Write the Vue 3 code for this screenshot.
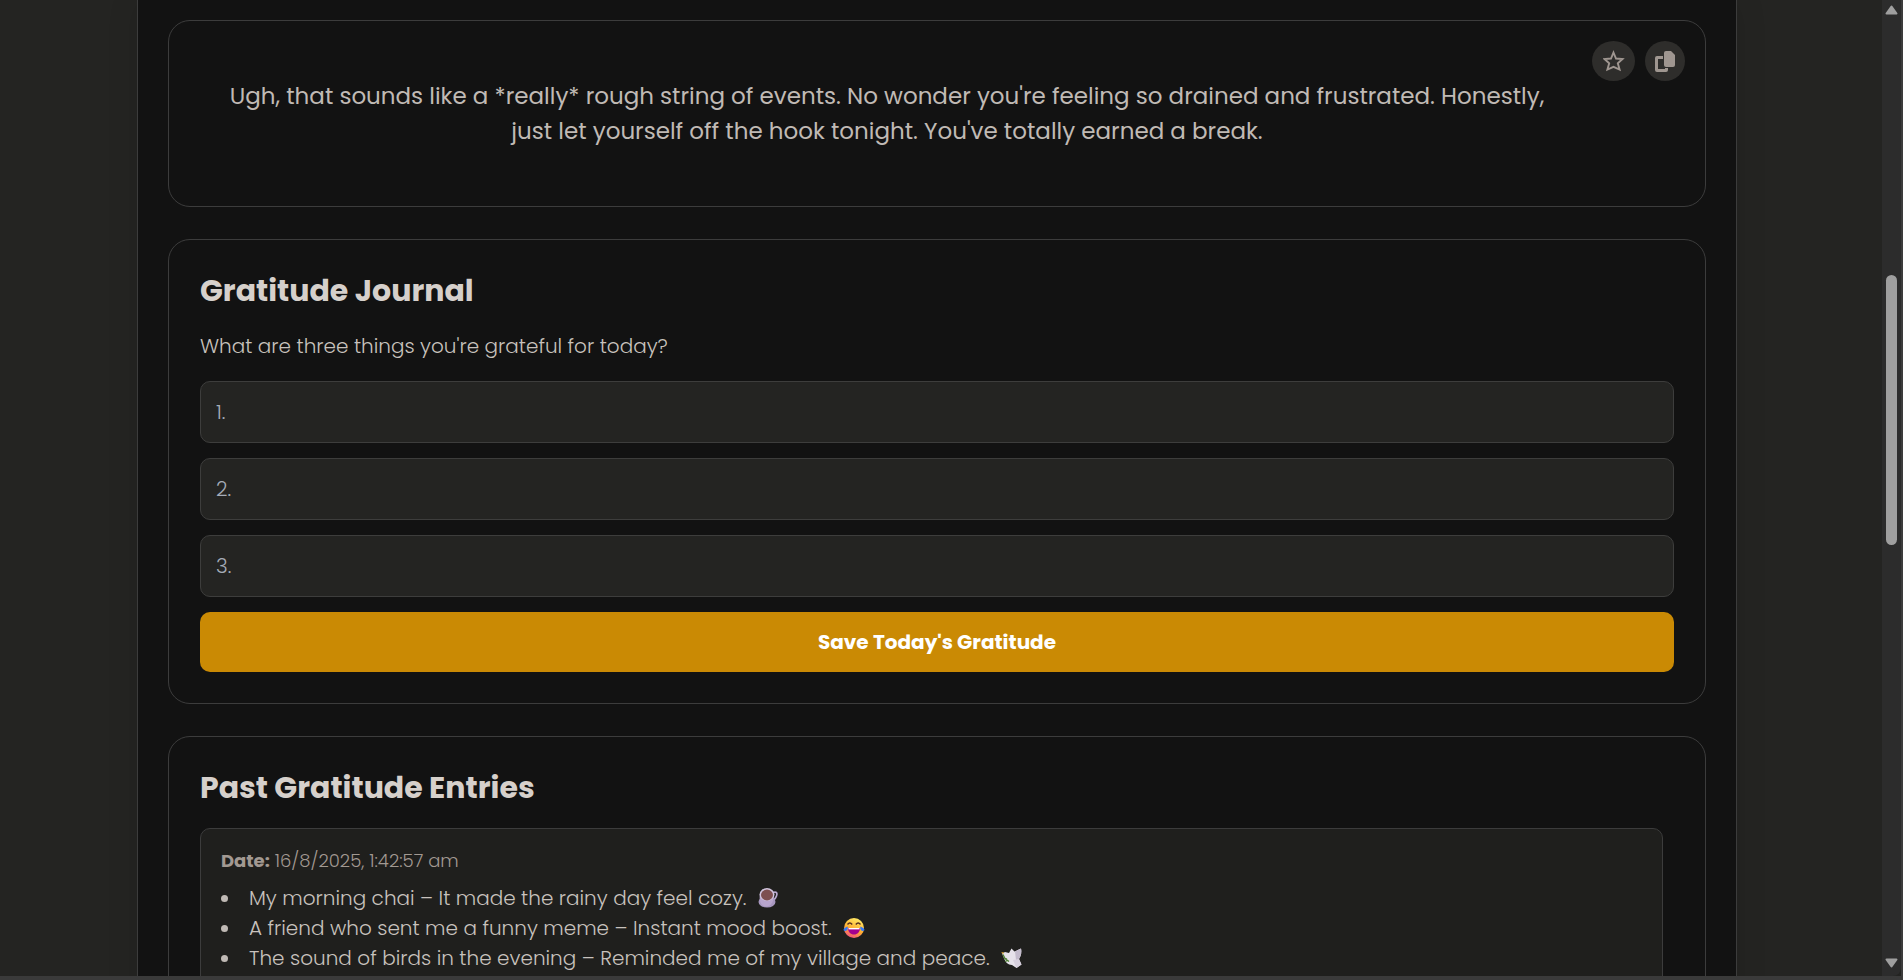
<template>
  <div class="window">
    <div class="viewport">
      <main class="container">

        <!-- Reply -->
        <section class="card reply">
          <p class="reply__text">{{ reply }}</p>
          <div class="reply__actions">
            <button
              type="button"
              class="icon-btn icon-btn--star"
              aria-label="Favourite"
              :aria-pressed="favourite"
              @click="favourite = !favourite"
            >
              <svg viewBox="0 0 22 22" width="22" height="22" aria-hidden="true">
                <path
                  d="M10.500 2.500L13 8.500L19.500 9L14.800 13.200L16.600 19.500L10.500 16.800L4.400 19.500L6.200 13.200L1.500 9L8 8.500z"
                  :fill="favourite ? 'currentColor' : 'none'"
                  stroke="currentColor"
                  stroke-width="1.900"
                />
              </svg>
            </button>
            <button type="button" class="icon-btn" aria-label="Copy" @click="copyReply">
              <svg viewBox="0 0 20 21" width="20" height="21" aria-hidden="true">
                <path
                  d="M11 0h5l4 4v10a2 2 0 0 1-2 2h-7a2 2 0 0 1-2-2V2a2 2 0 0 1 2-2z"
                  fill="currentColor"
                />
                <path
                  d="M2 5h6v3H3v10h7v-1h3v2a2 2 0 0 1-2 2H2a2 2 0 0 1-2-2V7a2 2 0 0 1 2-2z"
                  fill="currentColor"
                />
              </svg>
            </button>
          </div>
        </section>

        <!-- Journal -->
        <section class="card">
          <h2>Gratitude Journal</h2>
          <p class="question">What are three things you're grateful for today?</p>
          <form class="journal" @submit.prevent="saveEntry">
            <input
              v-for="(item, index) in items"
              :key="index"
              v-model="items[index]"
              type="text"
              :placeholder="`${index + 1}.`"
              :aria-label="`Gratitude ${index + 1}`"
            />
            <button type="submit" class="save">Save Today's Gratitude</button>
          </form>
        </section>

        <!-- Past entries -->
        <section class="card">
          <h2>Past Gratitude Entries</h2>
          <div class="entries">
            <article v-for="entry in entries" :key="entry.date" class="entry">
              <p class="entry__date"><strong>Date:</strong> {{ entry.date }}</p>
              <ul>
                <li v-for="line in entry.lines" :key="line.text">
                  <span>{{ line.text }}</span>
                  <svg v-if="line.icon === 'cup'" class="emoji" viewBox="0 0 22 22" aria-hidden="true">
                    <path d="M16 5.500c4-1.200 4.500 1 3.500 3.500s-2.500 4-4 4" fill="none" stroke="#b9a9cf" stroke-width="1.700" />
                    <ellipse cx="10" cy="15" rx="8.500" ry="5.500" fill="#a797bf" />
                    <path d="M3 7c-1 6 0 12.500 6 12.500S17 13 17 7z" fill="#b8a5cd" />
                    <ellipse cx="10" cy="7.500" rx="7.500" ry="6.500" fill="#d1c4dd" />
                    <ellipse cx="10" cy="8" rx="6" ry="5.400" fill="#7d4f50" />
                  </svg>
                  <svg v-else-if="line.icon === 'laugh'" class="emoji" viewBox="0 0 22 22" aria-hidden="true">
                    <defs>
                      <linearGradient id="face" x1="0.8" y1="0" x2="0.4" y2="1">
                        <stop offset="0" stop-color="#fff06a" />
                        <stop offset="0.6" stop-color="#ffae32" />
                        <stop offset="1" stop-color="#f4557a" />
                      </linearGradient>
                    </defs>
                    <circle cx="11" cy="11" r="10" fill="url(#face)" />
                    <path d="M4.500 7.500Q6.800 4.500 9.200 7.500M12.800 7.500Q15.200 4.500 17.500 7.500" fill="none" stroke="#56301f" stroke-width="1.400" />
                    <path d="M5 11h12c0 4-2.500 6.500-6 6.500S5 15 5 11z" fill="#a4008f" />
                    <path d="M5.500 11h11v1.400h-11z" fill="#fff" />
                    <path d="M4.500 9.500c.8 2.500-.5 4.500-2.500 4.500s-2.500-2.500 2.500-4.500zM17.500 9.500c-.8 2.500.5 4.500 2.500 4.500s2.500-2.500-2.500-4.500z" fill="#3479f6" />
                  </svg>
                  <svg v-else class="emoji" viewBox="0 0 22 22" aria-hidden="true">
                    <path d="M1 6.500l3-1.500 4 1L10.500 1.500l3 3 6.500-3c1 5-.5 8-2 10.500l2.500 5.500-5 3.500-4.500-3c-4 0-7-3-8.500-8z" fill="#e6e2ea" />
                    <path d="M14 4.500l6-3c1 5-.5 8-2 10.500l-3 1z" fill="#c3bbcc" />
                    <path d="M12 13l6-1 2.500 5.500-5 3.500z" fill="#d6cfdd" />
                    <path d="M2 7.500l2 4 4 3M3 11l3 1M4 14.500l3-1" fill="none" stroke="#4d7e32" stroke-width="1.300" />
                    <path d="M0 5.800l2.500-.8v2z" fill="#f2b632" />
                  </svg>
                </li>
              </ul>
            </article>
          </div>
        </section>

      </main>
    </div>

    <div class="scrollbar" aria-hidden="true">
      <svg viewBox="0 0 13 10" width="13" height="10">
        <path d="M6.500 1.500L11.500 8.500h-10z" fill="#9f9f9f" stroke="#9f9f9f" stroke-width="2" stroke-linejoin="round" />
      </svg>
      <div class="scrollbar__track">
        <div class="scrollbar__thumb"></div>
      </div>
      <svg viewBox="0 0 13 10" width="13" height="10">
        <path d="M6.500 8.500L11.500 1.500h-10z" fill="#9f9f9f" stroke="#9f9f9f" stroke-width="2" stroke-linejoin="round" />
      </svg>
    </div>
  </div>
</template>

<script setup>
import { ref } from 'vue'

const reply = "Ugh, that sounds like a *really* rough string of events. No wonder you're feeling so drained and frustrated. Honestly, just let yourself off the hook tonight. You've totally earned a break."

const favourite = ref(false)
const items = ref(['', '', ''])

const entries = ref([
  {
    date: '16/8/2025, 1:42:57 am',
    lines: [
      { text: 'My morning chai – It made the rainy day feel cozy.', icon: 'cup' },
      { text: 'A friend who sent me a funny meme – Instant mood boost.', icon: 'laugh' },
      { text: 'The sound of birds in the evening – Reminded me of my village and peace.', icon: 'dove' }
    ]
  }
])

const copyReply = () => {
  navigator.clipboard?.writeText(reply)
}

// clear the three fields once saved
const saveEntry = () => {
  items.value = ['', '', '']
}
</script>

<style>
body {
  margin: 0;
  background: #242422;
}
</style>

<style scoped>
.window,
.window * {
  box-sizing: border-box;
}

.window {
  display: flex;
  height: 100vh;
  overflow: hidden;
  border-right: 2px solid #3c3c3c;
  border-bottom: 4px solid #3a3a3a;
  background: #242422;
  color: #c8c2bd;
  font-family: Poppins, Inter, "Open Sans", sans-serif;
  font-size: 20px;
  font-weight: 300;
  line-height: 30px;
}

.viewport {
  flex: 1;
  min-width: 0;
  padding-right: 8px;
  overflow: hidden;
}

/* ==== CONTAINER ==== */
.container {
  display: flex;
  flex-direction: column;
  gap: 32px;
  max-width: 1600px;
  margin: 0 auto;
  padding: 20px 30px 32px;
  border: solid #3c3c3c;
  border-width: 0 1px;
  background: #121212;
  box-shadow: 0 0 30px rgba(0, 0, 0, 0.1);
}

.card {
  position: relative;
  padding: 31px;
  border: 1px solid #3c3c3c;
  border-radius: 22px;
}

h2 {
  margin: 0 0 20px;
  color: #d6d0cb;
  font-size: 30px;
  font-weight: 700;
  line-height: 40px;
}

p {
  margin: 0;
}

/* ==== REPLY ==== */
.reply {
  padding: 58px 148px 57px 48px;
}

.reply__text {
  color: #c0bab5;
  font-size: 23px;
  font-weight: 400;
  line-height: 35px;
  text-align: center;
}

.reply__actions {
  position: absolute;
  top: 20px;
  right: 20px;
  display: flex;
  gap: 10px;
}

.icon-btn {
  display: flex;
  align-items: center;
  justify-content: center;
  width: 40px;
  height: 40px;
  padding: 0;
  border: 0;
  border-radius: 50%;
  background: #2e2d2b;
  color: #9f9690;
  cursor: pointer;
}

.icon-btn--star {
  width: 43px;
}

/* ==== JOURNAL ==== */
.question {
  margin-bottom: 20px;
}

.journal {
  display: flex;
  flex-direction: column;
  gap: 15px;
}

.journal input {
  width: 100%;
  height: 62px;
  padding: 0 15px;
  border: 1px solid #3d3d3c;
  border-radius: 10px;
  outline: none;
  background: #242422;
  color: #d6d0cb;
  font: inherit;
}

.journal input::placeholder {
  color: #a5acb8;
  opacity: 1;
}

.save {
  height: 60px;
  border: 0;
  border-radius: 10px;
  background: #ca8a04;
  color: #fff;
  font-family: inherit;
  font-size: 20px;
  font-weight: 700;
  cursor: pointer;
}

/* ==== ENTRIES ==== */
.entries {
  padding-right: 11px;
}

.entry {
  padding: 18px 20px;
  border: 1px solid #3c3c3c;
  border-radius: 10px;
  background: #1f1f1d;
}

.entry__date {
  margin-bottom: 8px;
  color: #a29992;
  font-size: 18px;
  line-height: 28px;
}

.entry__date strong {
  font-weight: 700;
}

.entry ul {
  margin: 0;
  padding: 0;
  list-style: none;
}

.entry li {
  display: flex;
  align-items: center;
}

.entry li::before {
  content: "";
  width: 7px;
  height: 7px;
  margin-right: 21px;
  border-radius: 50%;
  background: #c0bab5;
}

.emoji {
  width: 22px;
  height: 22px;
  margin-left: 11px;
}

/* ==== SCROLLBAR ==== */
.scrollbar {
  display: flex;
  flex-direction: column;
  align-items: center;
  width: 19px;
  padding: 5px 0 8px;
  border-bottom-right-radius: 8px;
  background: #2c2c2c;
}

.scrollbar__track {
  display: flex;
  flex: 1;
  flex-direction: column;
}

.scrollbar__track::before {
  content: "";
  flex: 260;
}

.scrollbar__track::after {
  content: "";
  flex: 413;
}

.scrollbar__thumb {
  flex: 270;
  width: 11px;
  border-radius: 6px;
  background: #9f9f9f;
}
</style>
